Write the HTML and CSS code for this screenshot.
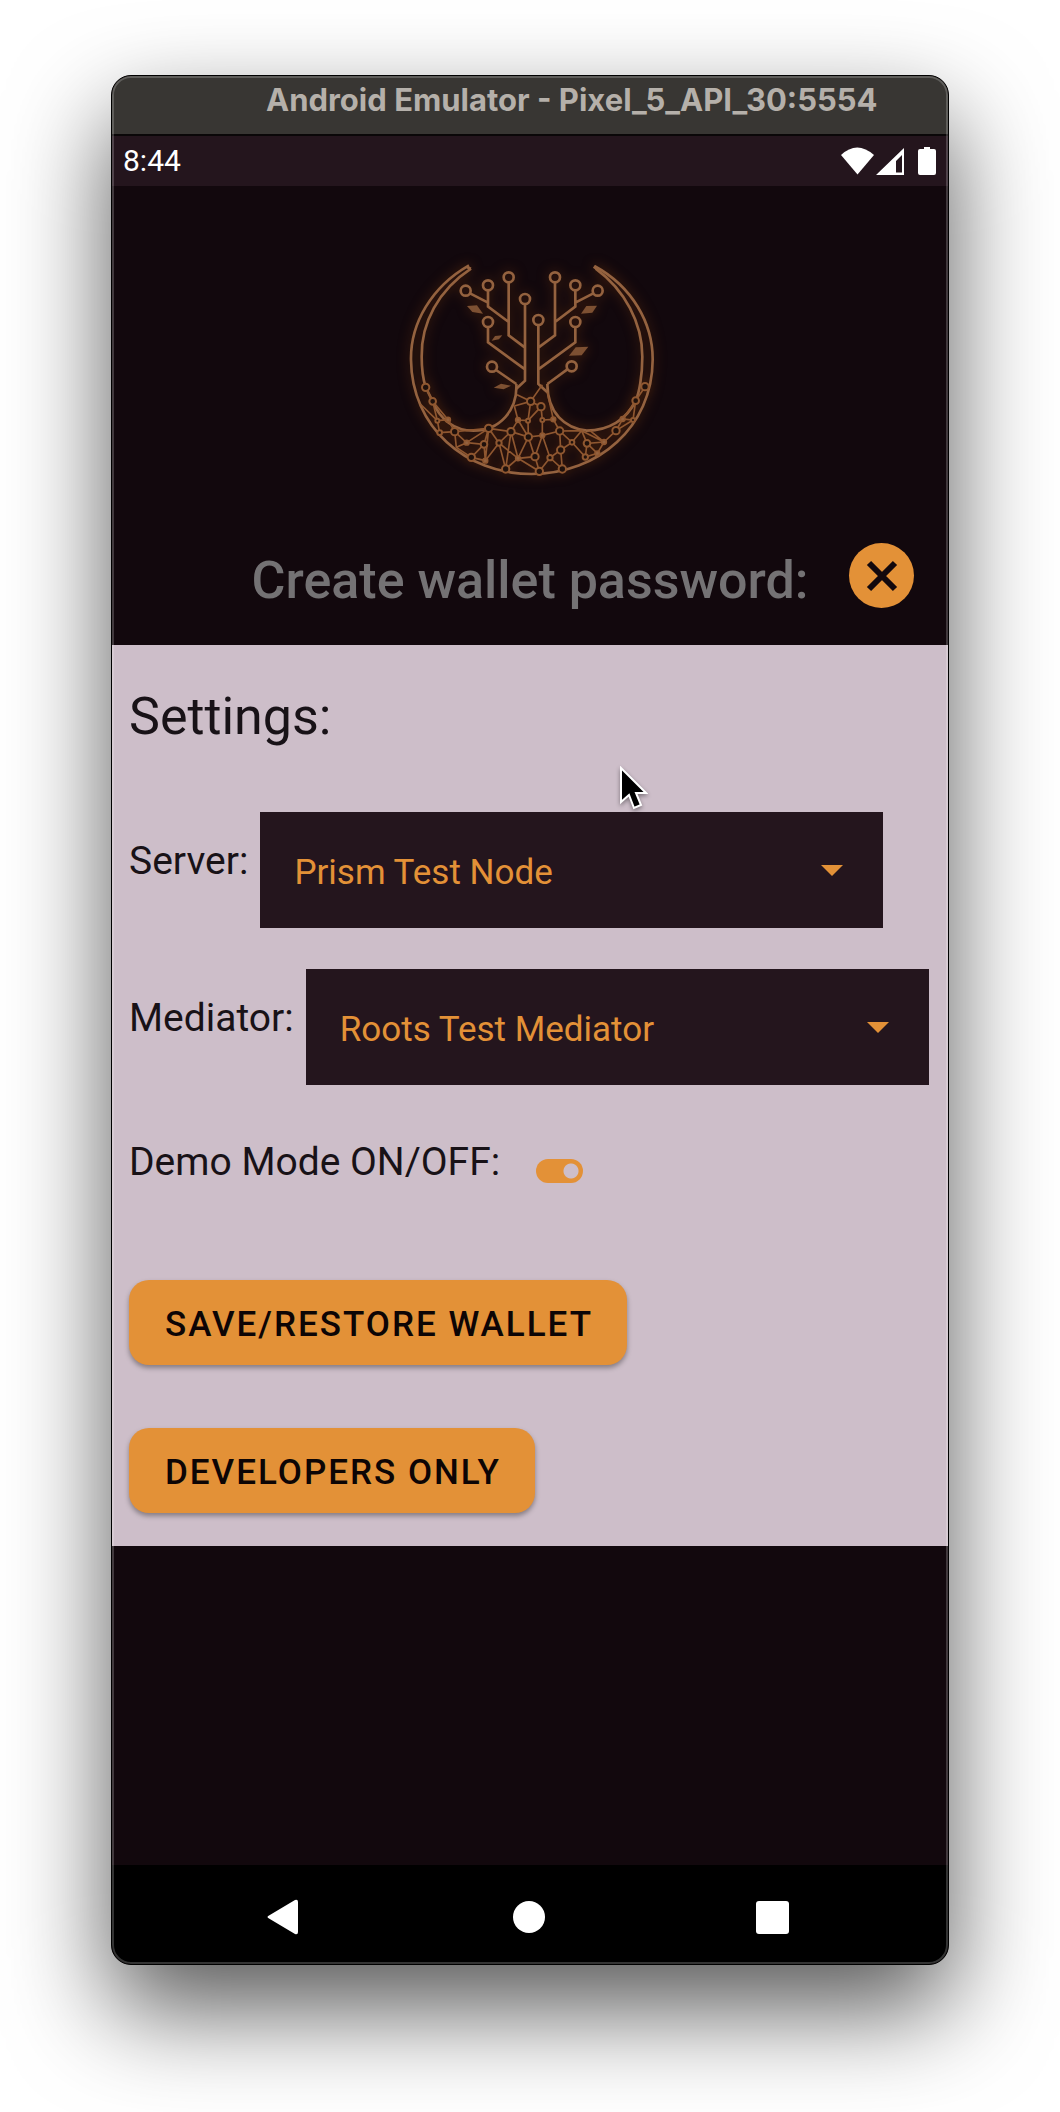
FILE: index.html
```html
<!DOCTYPE html>
<html lang="en">
<head>
  <meta charset="utf-8">
  <meta name="viewport" content="width=device-width, initial-scale=1">
  <title>Android Emulator - Pixel_5_API_30:5554</title>
  <link rel="stylesheet" href="styles.css">
</head>
<body>
  <div class="window">
    <div class="titlebar">Android Emulator - Pixel_5_API_30:5554</div>

    <div class="statusbar">
      <span class="clock">8:44</span>
      <svg class="status-icons" viewBox="0 0 96 28" aria-hidden="true">
        <path d="M0 8Q16 -7 33 8L16.500 27.500Z"/>
        <path fill-rule="evenodd" d="M63 1V28H35ZM61 8L55 14V25.500H61Z"/>
        <path d="M83 0h6v2h4q2 0 2 2v22q0 2-2 2H79q-2 0-2-2V4q0-2 2-2h4z"/>
      </svg>
    </div>

    <main class="screen">
      <header class="header">
        <svg class="logo" viewBox="0 0 810 720" role="img" aria-label="Roots tree logo">
          <g class="trunk">
            <path d="M222 46C110 110 46 220 48 330C50 530 210 672 410 672C610 672 772 530 773 330C774 220 712 110 598 48"/>
            <path d="M228 56C130 120 78 220 80 320C80 350 82 380 92 412L113 454C135 510 180 542 235 542C315 542 368 480 364 402"/>
            <path d="M602 56C690 120 742 220 742 320C742 380 732 430 722 452C695 510 640 542 575 542C510 535 458 490 457 402"/>
            <path d="M216 52L228 56M604 56L596 50"/>
            <path d="M225 130L279 158M279 121V170L341 216M341 97V256L390 293M390 162V392L364 416M279 231V277L390 358M303 360L364 402"/>
            <path d="M430 225V402L457 427M480 97V256L430 293M541 121V170L480 216M595 130L541 158M541 231V277L430 358M517 358L457 402"/>
            <circle cx="212" cy="122" r="15"/><circle cx="279" cy="106" r="15"/><circle cx="341" cy="82" r="15"/>
            <circle cx="390" cy="147" r="15"/><circle cx="279" cy="216" r="15"/><circle cx="291" cy="350" r="15"/>
            <circle cx="430" cy="210" r="15"/><circle cx="480" cy="82" r="15"/><circle cx="541" cy="106" r="15"/>
            <circle cx="608" cy="122" r="15"/><circle cx="541" cy="216" r="15"/><circle cx="530" cy="349" r="15"/>
          </g>
          <g class="leaves">
            <path d="M216 168L246 166L264 191L232 186Z"/>
            <path d="M290 272L300 258L322 256L312 268Z"/>
            <path d="M296 413L318 401L348 407L326 418Z"/>
            <path d="M558 191L574 168L606 167L592 188Z"/>
            <path d="M522 317L542 292L580 290L560 316Z"/>
          </g>
          <g class="roots">
            <path d="M92 412L113 454L127 512L134 548L179 545L159 509L113 454M76 462L127 512L159 509M179 545L184 592L215 578L179 545L281 535L215 578L267 583L229 622L184 592M267 583L271 632L229 622M267 583L281 535L271 632L312 579L281 535L348 545L312 579L332 657L348 545L369 510L399 512L407 454L366 434M358 468L407 454M358 468L369 510M348 545L369 625L312 579M332 657L369 625L419 620L400 561L348 545M369 625L400 561L399 512L438 470L407 454L442 404M369 510L400 561M399 512L400 561"/>
            <path d="M369 625L433 664L420 620L442 556L442 510L438 470M442 510L475 508L494 543L442 556L400 561M475 508L457 427M442 556L465 623L497 600L494 543L531 577L497 600L502 657L465 623L433 664M494 543L560 542L531 577L571 621L576 580L560 542L627 576L576 580L607 610L571 621M585 542L627 576L663 542L683 507L714 510L722 452L750 410M683 507L722 452M627 576L607 610M663 542L714 510"/>
            <g class="joints">
              <circle cx="92" cy="412" r="11"/><circle cx="113" cy="454" r="10"/><circle cx="127" cy="512" r="6"/>
              <circle cx="134" cy="548" r="7"/><circle cx="179" cy="545" r="11"/><circle cx="267" cy="583" r="10"/>
              <circle cx="229" cy="622" r="11"/><circle cx="281" cy="535" r="11"/><circle cx="312" cy="579" r="8"/>
              <circle cx="332" cy="657" r="11"/><circle cx="348" cy="545" r="11"/><circle cx="407" cy="454" r="11"/>
              <circle cx="399" cy="512" r="6"/><circle cx="400" cy="561" r="11"/><circle cx="420" cy="620" r="11"/>
              <circle cx="438" cy="470" r="11"/><circle cx="442" cy="510" r="6"/><circle cx="494" cy="543" r="11"/>
              <circle cx="531" cy="577" r="7"/><circle cx="576" cy="580" r="10"/><circle cx="497" cy="600" r="11"/>
              <circle cx="465" cy="623" r="8"/><circle cx="433" cy="664" r="11"/><circle cx="502" cy="657" r="11"/>
              <circle cx="571" cy="621" r="8"/><circle cx="663" cy="542" r="11"/><circle cx="714" cy="510" r="6"/>
              <circle cx="722" cy="452" r="10"/><circle cx="750" cy="410" r="11"/>
            </g>
            <g class="dots">
              <circle cx="159" cy="509" r="7"/><circle cx="215" cy="578" r="7"/><circle cx="271" cy="632" r="7"/>
              <circle cx="369" cy="510" r="7"/><circle cx="369" cy="625" r="7"/><circle cx="475" cy="508" r="7"/>
              <circle cx="442" cy="556" r="7"/><circle cx="607" cy="610" r="7"/><circle cx="627" cy="576" r="7"/>
              <circle cx="683" cy="507" r="7"/>
            </g>
          </g>
        </svg>
        <div class="heading-row">
          <h1 class="heading">Create wallet password:</h1>
          <button class="close" type="button" aria-label="Close settings">
            <svg class="close-icon" viewBox="0 0 32 32" aria-hidden="true"><path d="M3 3L29 29M29 3L3 29"/></svg>
          </button>
        </div>
      </header>

      <section class="panel">
        <h2 class="panel-title">Settings:</h2>

        <div class="field">
          <label class="field-label" for="server">Server:</label>
          <div class="dropdown">
            <select class="dropdown-select" id="server"><option>Prism Test Node</option></select>
            <svg class="dropdown-arrow" viewBox="0 0 22 11" aria-hidden="true"><path d="M0 0H22L11 11Z"/></svg>
          </div>
        </div>

        <div class="field">
          <label class="field-label" for="mediator">Mediator:</label>
          <div class="dropdown">
            <select class="dropdown-select" id="mediator"><option>Roots Test Mediator</option></select>
            <svg class="dropdown-arrow" viewBox="0 0 22 11" aria-hidden="true"><path d="M0 0H22L11 11Z"/></svg>
          </div>
        </div>

        <div class="toggle-row">
          <label for="demo">Demo Mode ON/OFF:</label>
          <input class="switch" type="checkbox" id="demo" checked>
        </div>

        <div class="actions">
          <button class="action" type="button">SAVE/RESTORE WALLET</button>
          <button class="action" type="button">DEVELOPERS ONLY</button>
        </div>

        <svg class="cursor" viewBox="0 0 28 44" aria-hidden="true">
          <path d="M1 2V36L9 29L14 42L21 39L16 27H26Z"/>
        </svg>
      </section>
    </main>

    <nav class="navbar">
      <button class="nav-button" type="button" aria-label="Back">
        <svg class="nav-icon" viewBox="0 0 36 36" aria-hidden="true"><path d="M2 16.500L28 1Q31 0 31 3V33Q31 36 28 35L2 19.500Q-1 18 2 16.500Z"/></svg>
      </button>
      <button class="nav-button" type="button" aria-label="Home">
        <svg class="nav-icon" viewBox="0 0 36 36" aria-hidden="true"><circle cx="18" cy="18" r="16"/></svg>
      </button>
      <button class="nav-button" type="button" aria-label="Overview">
        <svg class="nav-icon" viewBox="0 0 36 36" aria-hidden="true"><rect x="1" y="2" width="33" height="33" rx="3"/></svg>
      </button>
    </nav>
  </div>
</body>
</html>
```

FILE: styles.css
```css
:root {
  --night: #12080d;
  --plum: #24151d;
  --mauve: #cdbec9;
  --amber: #e39137;
  --ink: #181217;
}

* {
  box-sizing: border-box;
}

body {
  margin: 0;
  padding: 75px 16px 147px;
  background: #fff;
  font-family: Roboto, "Liberation Sans", sans-serif;
}

button,
select {
  margin: 0;
  border: 0;
  font-family: inherit;
}

/* Emulator window */
.window {
  position: relative;
  display: flex;
  flex-direction: column;
  max-width: 838px;
  min-height: calc(100vh - 222px);
  margin: 0 auto;
  overflow: hidden;
  border: 1px solid #000;
  border-radius: 20px;
  background: var(--night);
  box-shadow: 0 44px 100px rgba(0, 0, 0, 0.66);
}

.window::after {
  content: "";
  position: absolute;
  inset: 0;
  border: 2px solid rgba(255, 255, 255, 0.2);
  border-radius: 19px;
  pointer-events: none;
}

.titlebar {
  height: 60px;
  padding: 6px 0 0 154px;
  border-bottom: 2px solid #0a0708;
  background: #383633;
  color: #b5b0aa;
  font: 700 31px/36px Inter, "Liberation Sans", sans-serif;
  white-space: nowrap;
}

.statusbar {
  display: flex;
  align-items: center;
  justify-content: space-between;
  height: 50px;
  padding: 0 11px;
  background: var(--plum);
  color: #fff;
}

.clock {
  font-size: 30px;
  line-height: 36px;
}

.status-icons {
  width: 96px;
  height: 28px;
  fill: #fff;
}

/* App screen */
.screen {
  flex: 1;
}

.header {
  padding: 64px 34px 34px;
}

.logo {
  display: block;
  width: 270px;
  height: 240px;
  margin: 0 auto 53px;
  fill: none;
  stroke: #94623f;
  filter: drop-shadow(0 0 6px rgba(150, 70, 10, 0.5));
}

.trunk {
  stroke-width: 8;
}

.leaves {
  fill: #7d5032;
  stroke: none;
}

.roots {
  stroke: #8f5730;
  stroke-width: 5;
}

.joints {
  fill: #1f110c;
  stroke-width: 6;
}

.dots {
  fill: #94623f;
}

.heading-row {
  display: grid;
  grid-template-columns: 1fr auto 1fr;
  align-items: start;
}

.heading {
  grid-column: 2;
  margin: 0;
  padding-top: 8px;
  color: #747274;
  font-size: 52px;
  font-weight: 500;
  line-height: 60px;
}

.close {
  display: grid;
  place-items: center;
  justify-self: end;
  width: 65px;
  height: 65px;
  padding: 0;
  border-radius: 50%;
  background: var(--amber);
}

.close-icon {
  width: 32px;
  height: 32px;
  stroke: var(--night);
  stroke-width: 6;
}

/* Settings panel */
.panel {
  position: relative;
  padding: 42px 17px 33px;
  background: var(--mauve);
  color: var(--ink);
  font-size: 39px;
  line-height: 46px;
}

.panel-title {
  margin: 0 0 65px;
  font-size: 52px;
  font-weight: 400;
  line-height: 60px;
}

.field {
  display: flex;
  align-items: center;
  gap: 12px;
  margin-bottom: 41px;
}

.field-label {
  padding-bottom: 18px;
}

.dropdown {
  display: grid;
  flex: 0 1 623px;
  align-items: center;
}

.dropdown-select {
  grid-area: 1 / 1;
  width: 100%;
  height: 116px;
  padding: 4px 80px 0 34px;
  border-radius: 0;
  appearance: none;
  background: var(--plum);
  color: var(--amber);
  font-size: 35px;
}

.dropdown-arrow {
  grid-area: 1 / 1;
  justify-self: end;
  width: 22px;
  height: 11px;
  margin-right: 40px;
  fill: var(--amber);
  pointer-events: none;
}

.toggle-row {
  display: flex;
  align-items: flex-end;
  gap: 36px;
  padding-top: 13px;
}

.switch {
  width: 47px;
  height: 24px;
  margin: 0 0 2px;
  border-radius: 12px;
  appearance: none;
  background: radial-gradient(circle at 12px 12px, var(--mauve) 7px, #8b7f87 8px);
}

.switch:checked {
  background: radial-gradient(circle at 35px 12px, var(--mauve) 7px, var(--amber) 8px);
}

.actions {
  display: flex;
  flex-direction: column;
  align-items: flex-start;
  gap: 63px;
  margin-top: 95px;
}

.action {
  height: 85px;
  padding: 3px 34px 0 36px;
  border-radius: 20px;
  background: var(--amber);
  box-shadow: 0 3px 5px rgba(0, 0, 0, 0.35);
  color: #0d0505;
  font-size: 35px;
  font-weight: 500;
  letter-spacing: 2px;
}

.cursor {
  position: absolute;
  top: 121px;
  left: 508px;
  width: 28px;
  height: 44px;
  fill: #000;
  stroke: #fff;
  stroke-width: 2;
  filter: drop-shadow(0 2px 2px rgba(0, 0, 0, 0.4));
}

/* Android navigation bar */
.navbar {
  display: flex;
  justify-content: center;
  gap: 208px;
  height: 99px;
  padding-right: 3px;
  background: #000;
}

.nav-button {
  padding: 4px 0 0;
  background: none;
}

.nav-icon {
  display: block;
  width: 36px;
  height: 36px;
  fill: #fff;
}
```
